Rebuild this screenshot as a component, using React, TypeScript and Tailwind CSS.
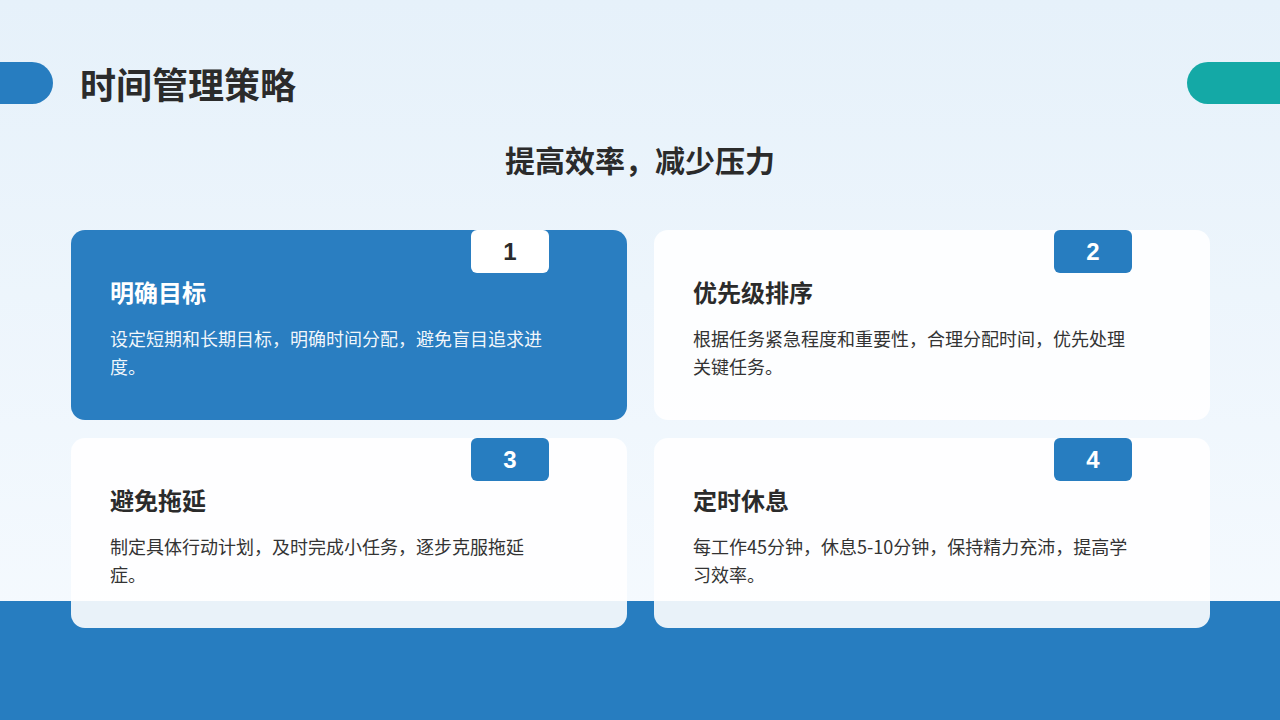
const font = { fontFamily: '"Noto Sans CJK SC", "Liberation Sans", sans-serif' };

const cards = [
  { n: "1", title: "明确目标", text: "设定短期和长期目标，明确时间分配，避免盲目追求进度。", active: true },
  { n: "2", title: "优先级排序", text: "根据任务紧急程度和重要性，合理分配时间，优先处理关键任务。" },
  { n: "3", title: "避免拖延", text: "制定具体行动计划，及时完成小任务，逐步克服拖延症。" },
  { n: "4", title: "定时休息", text: "每工作45分钟，休息5-10分钟，保持精力充沛，提高学习效率。" },
];

export default function App() {
  return (
    <div style={font} className="relative w-[1280px] h-[720px] overflow-hidden bg-gradient-to-b from-[#e6f1fa] to-[#f7fbff]">
      <div className="absolute left-0 right-0 bottom-0 h-[119px] bg-[#277dc0]" />
      <div className="relative flex flex-col h-full">
        <div className="flex items-center justify-between mt-[62px] h-[42px]">
          <div className="flex items-center">
            <div className="w-[53px] h-[42px] bg-[#277dc0] rounded-r-full" />
            <h1 className="ml-[27px] text-[36px] font-bold text-[#2b2b2b] leading-none">时间管理策略</h1>
          </div>
          <div className="w-[93px] h-[42px] bg-[#14a9a6] rounded-l-full" />
        </div>
        <h2 className="mt-[40px] text-center text-[30px] font-bold text-[#2b2b2b] leading-none">提高效率，减少压力</h2>
        <div className="grid grid-cols-[556px_556px] gap-x-[27px] gap-y-[18px] mt-[56px] ml-[71px]">
          {cards.map((c) => (
            <div
              key={c.n}
              className={`relative h-[190px] rounded-[14px] pl-[39px] pt-[44px] ${c.active ? "bg-[#2a7ec1] text-white" : "bg-white/90 text-[#2b2b2b]"}`}
            >
              <div
                className={`absolute top-0 right-[78px] w-[78px] h-[43px] rounded-[6px] flex items-center justify-center text-[24px] font-bold ${c.active ? "bg-white text-[#2b2b2b]" : "bg-[#277dc0] text-white"}`}
                style={{ fontFamily: '"Liberation Sans", sans-serif' }}
              >
                {c.n}
              </div>
              <div className="text-[24px] font-bold leading-[36px]">{c.title}</div>
              <p className={`mt-[14px] w-[440px] text-[18px] leading-[28px] ${c.active ? "text-white/95" : "text-[#333]"}`}>{c.text}</p>
            </div>
          ))}
        </div>
      </div>
    </div>
  );
}
